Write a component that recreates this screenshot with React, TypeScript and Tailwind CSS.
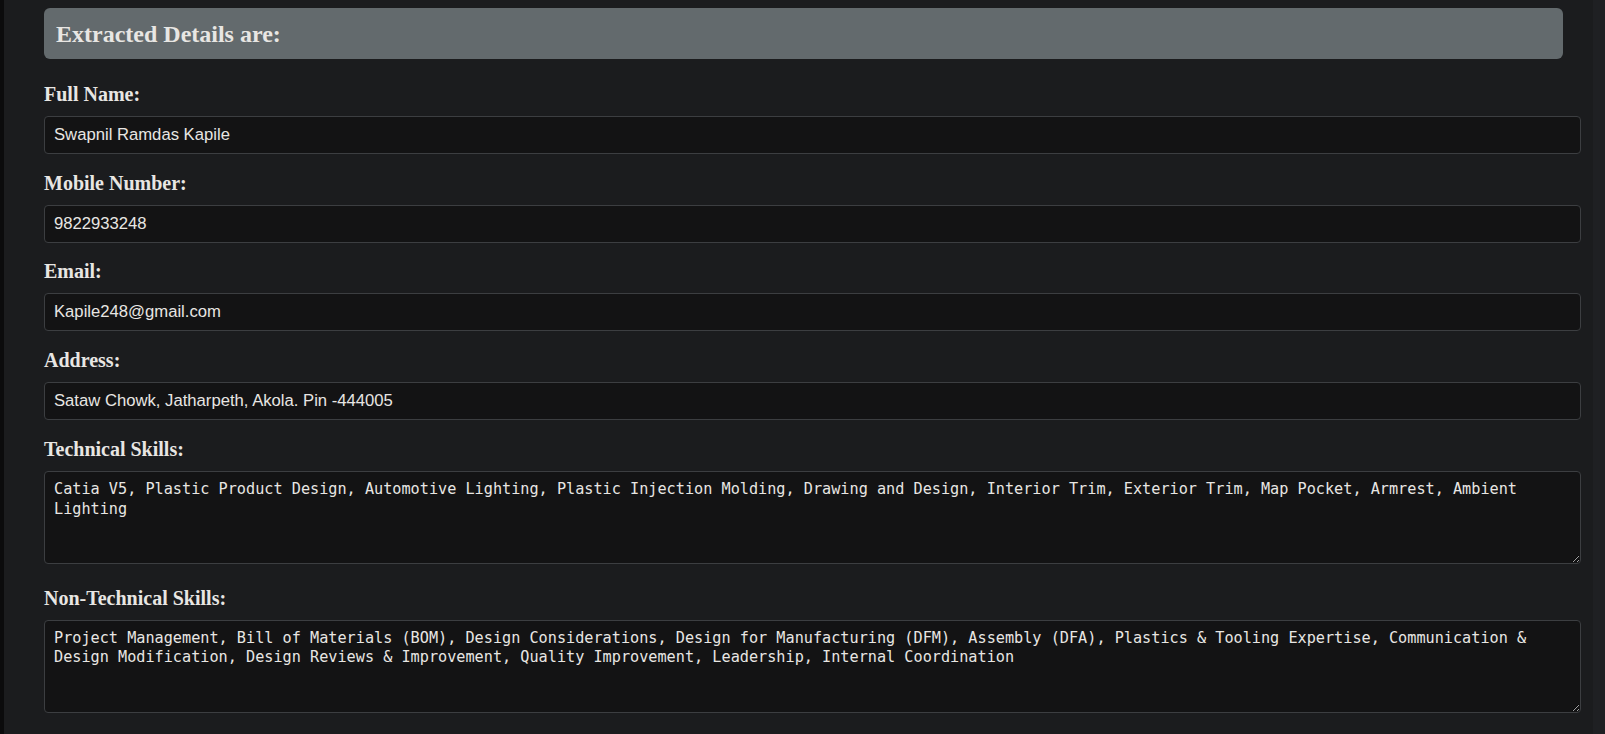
import React from "react";

const fields: { label: string; value: string; area?: boolean }[] = [
  { label: "Full Name:", value: "Swapnil Ramdas Kapile" },
  { label: "Mobile Number:", value: "9822933248" },
  { label: "Email:", value: "Kapile248@gmail.com" },
  { label: "Address:", value: "Sataw Chowk, Jatharpeth, Akola. Pin -444005" },
  {
    label: "Technical Skills:",
    value:
      "Catia V5, Plastic Product Design, Automotive Lighting, Plastic Injection Molding, Drawing and Design, Interior Trim, Exterior Trim, Map Pocket, Armrest, Ambient Lighting",
    area: true,
  },
  {
    label: "Non-Technical Skills:",
    value:
      "Project Management, Bill of Materials (BOM), Design Considerations, Design for Manufacturing (DFM), Assembly (DFA), Plastics & Tooling Expertise, Communication & Design Modification, Design Reviews & Improvement, Quality Improvement, Leadership, Internal Coordination",
    area: true,
  },
];

export default function App() {
  return (
    <div className="flex h-[734px] w-[1605px] overflow-hidden bg-[#1b1c1e]">
      <div className="w-[4px] shrink-0 bg-[#0b0b0c]" />
      <div className="flex w-[1589px] shrink-0 flex-col pl-[40px] pt-[8px]">
        <div className="flex h-[51px] w-[1519px] items-center rounded-[6px] bg-[#636a6d] px-[12px]">
          <h3 className="font-['Liberation_Serif',serif] text-[24px] font-bold leading-none text-[#e8e6e3]">
            Extracted Details are:
          </h3>
        </div>
        <div className="mt-[24px] flex w-[1537px] flex-col gap-[17.5px]">
          {fields.map((f) => (
            <div key={f.label} className={f.area ? "pt-[1px] pb-[4px]" : ""}>
              <label className="mb-[10px] block font-['Liberation_Serif',serif] text-[20px] font-bold leading-[23px] text-[#e8e6e3]">
                {f.label}
              </label>
              {f.area ? (
                <textarea
                  readOnly
                  value={f.value}
                  className="block h-[93px] w-full rounded-[4px] border border-[#3c3e41] bg-[#131314] px-[9px] pt-[8px] font-['DejaVu_Sans_Mono',monospace] text-[15.2px] leading-[19.5px] text-[#e8e6e3] outline-none [color-scheme:dark]"
                />
              ) : (
                <input
                  readOnly
                  value={f.value}
                  className="block h-[38px] w-full rounded-[4px] border border-[#3c3e41] bg-[#131314] px-[9px] font-['Liberation_Sans',Arial,sans-serif] text-[16.67px] text-[#e8e6e3] outline-none"
                />
              )}
            </div>
          ))}
        </div>
      </div>
      <div className="w-[12px] shrink-0 bg-[#1f2023]" />
    </div>
  );
}
